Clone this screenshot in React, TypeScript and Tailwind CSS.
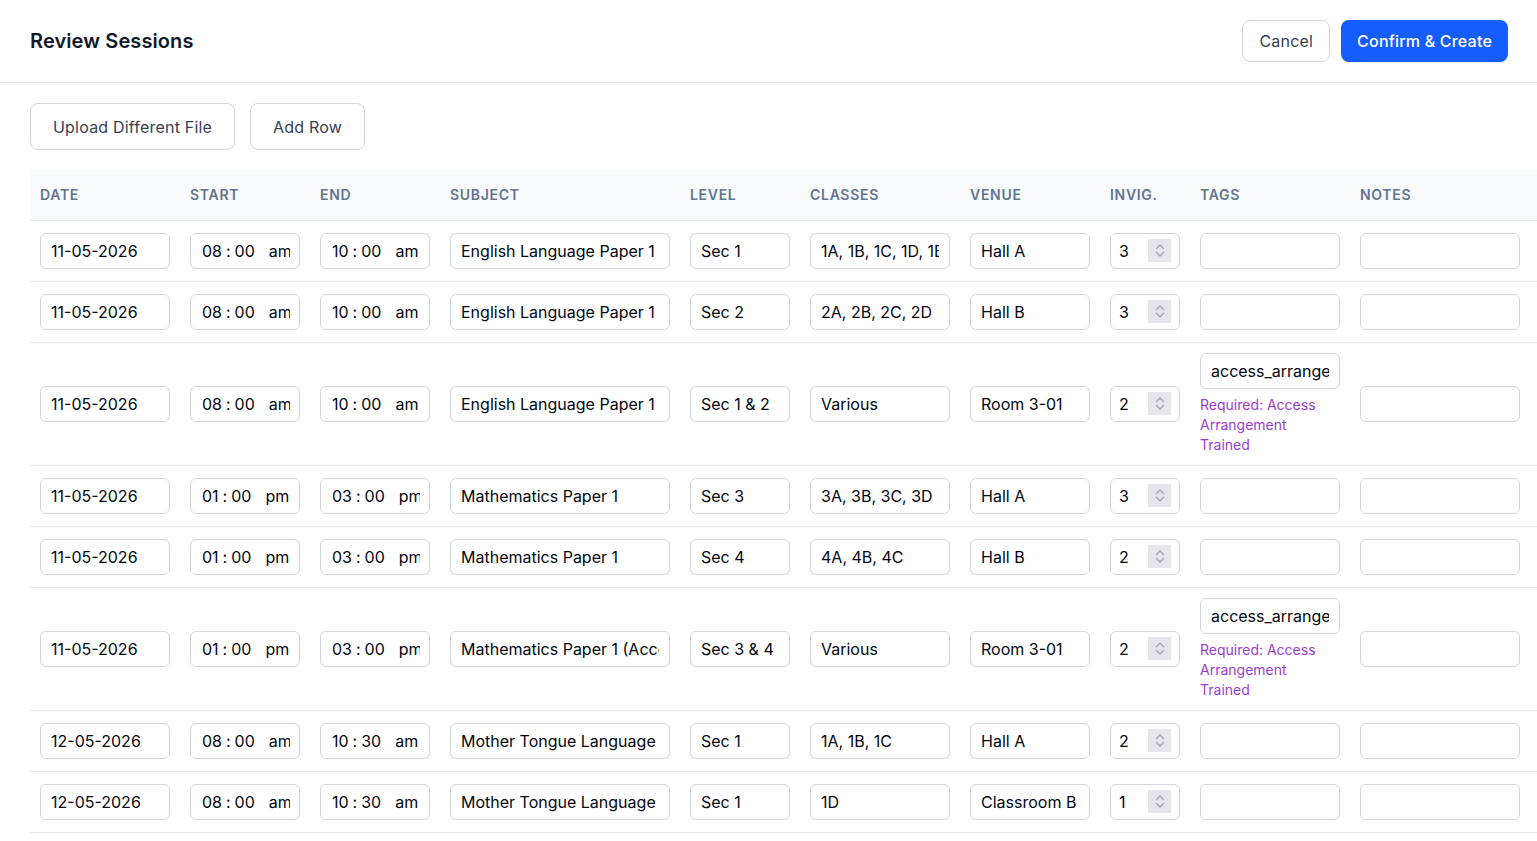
import React from "react";

type Row = {
  date: string;
  start: [string, string, string];
  end: [string, string, string];
  subject: string;
  level: string;
  classes: string;
  venue: string;
  invig: number;
  tag?: string;
  note?: string;
};

const rows: Row[] = [
  { date: "11-05-2026", start: ["08", "00", "am"], end: ["10", "00", "am"], subject: "English Language Paper 1", level: "Sec 1", classes: "1A, 1B, 1C, 1D, 1E", venue: "Hall A", invig: 3 },
  { date: "11-05-2026", start: ["08", "00", "am"], end: ["10", "00", "am"], subject: "English Language Paper 1", level: "Sec 2", classes: "2A, 2B, 2C, 2D", venue: "Hall B", invig: 3 },
  { date: "11-05-2026", start: ["08", "00", "am"], end: ["10", "00", "am"], subject: "English Language Paper 1", level: "Sec 1 & 2", classes: "Various", venue: "Room 3-01", invig: 2, tag: "access_arrangement", note: "Required: Access Arrangement Trained" },
  { date: "11-05-2026", start: ["01", "00", "pm"], end: ["03", "00", "pm"], subject: "Mathematics Paper 1", level: "Sec 3", classes: "3A, 3B, 3C, 3D", venue: "Hall A", invig: 3 },
  { date: "11-05-2026", start: ["01", "00", "pm"], end: ["03", "00", "pm"], subject: "Mathematics Paper 1", level: "Sec 4", classes: "4A, 4B, 4C", venue: "Hall B", invig: 2 },
  { date: "11-05-2026", start: ["01", "00", "pm"], end: ["03", "00", "pm"], subject: "Mathematics Paper 1 (Access Arrangement)", level: "Sec 3 & 4", classes: "Various", venue: "Room 3-01", invig: 2, tag: "access_arrangement", note: "Required: Access Arrangement Trained" },
  { date: "12-05-2026", start: ["08", "00", "am"], end: ["10", "30", "am"], subject: "Mother Tongue Language Paper 1", level: "Sec 1", classes: "1A, 1B, 1C", venue: "Hall A", invig: 2 },
  { date: "12-05-2026", start: ["08", "00", "am"], end: ["10", "30", "am"], subject: "Mother Tongue Language Paper 1", level: "Sec 1", classes: "1D", venue: "Classroom B", invig: 1 },
];

const headers = [
  { label: "Date", w: "w-[150px]" },
  { label: "Start", w: "w-[130px]" },
  { label: "End", w: "w-[130px]" },
  { label: "Subject", w: "w-[240px]" },
  { label: "Level", w: "w-[120px]" },
  { label: "Classes", w: "w-[160px]" },
  { label: "Venue", w: "w-[140px]" },
  { label: "Invig.", w: "w-[90px]" },
  { label: "Tags", w: "w-[160px]" },
  { label: "Notes", w: "w-[180px]" },
  { label: "", w: "w-[60px]" },
];

const field = "h-9 rounded-md border border-gray-300 bg-white text-base text-gray-950 flex items-center overflow-hidden whitespace-nowrap";

function TextBox({ value, w }: { value: string; w: string }) {
  return (
    <div className={`${field} ${w} px-[10px]`}>
      <span className="block min-w-0 flex-1 overflow-hidden">{value}</span>
    </div>
  );
}

function TimeBox({ t }: { t: [string, string, string] }) {
  return (
    <div className={`${field} w-[110px] pl-[11px]`}>
      <div className="flex items-center overflow-hidden w-[88px] shrink-0">
        <span>{t[0]}</span>
        <span className="px-1">:</span>
        <span>{t[1]}</span>
        <span className="ml-[14px] min-w-0 overflow-hidden">{t[2]}</span>
      </div>
    </div>
  );
}

function NumberBox({ n }: { n: number }) {
  return (
    <div className={`${field} w-[70px] pl-[8px] pr-[8px] justify-between`}>
      <span>{n}</span>
      <span className="w-[23px] h-[23px] bg-[#e6e6ea] flex items-center justify-center">
        <svg width="10" height="17" viewBox="0 0 10 17" fill="none" stroke="#9ca3af" strokeWidth="1.3" strokeLinecap="round" strokeLinejoin="round">
          <path d="M1.5 6.5 L5 3 L8.5 6.5" />
          <path d="M1.5 10.5 L5 14 L8.5 10.5" />
        </svg>
      </span>
    </div>
  );
}

export default function App() {
  return (
    <div className="min-h-screen bg-white" style={{ fontFamily: "Inter, 'Noto Sans', sans-serif" }}>
      <div className="rounded-2xl bg-white overflow-hidden">
        <div className="flex items-center justify-between h-[83px] pl-[30px] pr-[29px] border-b border-gray-200">
          <h1 className="text-xl font-semibold text-gray-900 tracking-[0.1px]">Review Sessions</h1>
          <div className="flex items-center gap-[11px]">
            <button className="h-[42px] px-[16px] rounded-lg border border-gray-300 text-base text-gray-700 bg-white tracking-[0.2px]">Cancel</button>
            <button className="h-[42px] px-[16px] rounded-lg bg-blue-600 text-base font-medium text-white tracking-[0.2px]">Confirm &amp; Create</button>
          </div>
        </div>

        <div className="flex gap-[15px] pl-[30px] pt-[20px] pb-[20px]">
          <button className="h-[47px] px-[22px] rounded-lg border border-gray-300 text-base text-gray-700 tracking-[0.2px]">Upload Different File</button>
          <button className="h-[47px] px-[22px] rounded-lg border border-gray-300 text-base text-gray-700 tracking-[0.2px]">Add Row</button>
        </div>

        <div className="pl-[30px] overflow-hidden">
          <table className="table-fixed border-collapse w-[1560px] text-left">
            <thead>
              <tr className="bg-slate-50 border-b border-gray-200">
                {headers.map((h, i) => (
                  <th key={i} className={`${h.w} h-[50px] px-2.5 text-sm font-semibold uppercase tracking-wider text-slate-500`}>
                    {h.label}
                  </th>
                ))}
              </tr>
            </thead>
            <tbody>
              {rows.map((r, i) => (
                <tr key={i} className="border-b border-gray-200">
                  <td className="px-2.5 py-3 align-middle"><TextBox value={r.date} w="w-[130px]" /></td>
                  <td className="px-2.5 py-3"><TimeBox t={r.start} /></td>
                  <td className="px-2.5 py-3"><TimeBox t={r.end} /></td>
                  <td className="px-2.5 py-3"><TextBox value={r.subject} w="w-[220px]" /></td>
                  <td className="px-2.5 py-3"><TextBox value={r.level} w="w-[100px]" /></td>
                  <td className="px-2.5 py-3"><TextBox value={r.classes} w="w-[140px]" /></td>
                  <td className="px-2.5 py-3"><TextBox value={r.venue} w="w-[120px]" /></td>
                  <td className="px-2.5 py-3"><NumberBox n={r.invig} /></td>
                  <td className="px-2.5 py-2.5">
                    <TextBox value={r.tag ?? ""} w="w-[140px]" />
                    {r.note && (
                      <p className="mt-1.5 w-[140px] text-sm leading-5 text-[#9d3bd8]">{r.note}</p>
                    )}
                  </td>
                  <td className="px-2.5 py-3"><TextBox value="" w="w-[160px]" /></td>
                  <td className="px-2.5 py-3"></td>
                </tr>
              ))}
            </tbody>
          </table>
        </div>
        <div className="h-10" />
      </div>
    </div>
  );
}
